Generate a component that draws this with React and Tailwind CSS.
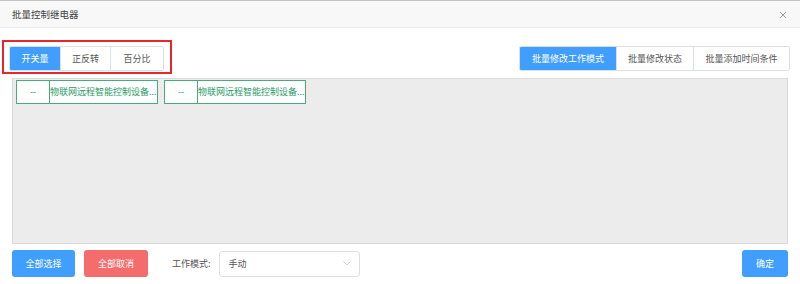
import React from "react";

const font = { fontFamily: '"Noto Sans CJK SC", "Liberation Sans", sans-serif' };

const leftTabs = ["开关量", "正反转", "百分比"];
const leftW = ["w-[50px]", "w-[50px]", "w-[53px]"];
const rightTabs = ["批量修改工作模式", "批量修改状态", "批量添加时间条件"];
const rightW = ["w-[96px]", "w-[77px]", "w-[96px]"];

const devices = [
  { id: 1, name: "物联网远程智能控制设备..." },
  { id: 2, name: "物联网远程智能控制设备..." },
];

const App = () => {
  return (
    <div className="relative w-[800px] h-[284px] bg-white text-[9px] text-[#333]" style={font}>
      <div className="h-px bg-[#c4c4c4]" />
      <div className="h-[27px] bg-[#f8f8f8] border-b border-[#ebebeb] flex items-center justify-between pl-3 pr-[13px]">
        <span className="text-[9.5px] text-[#444]">批量控制继电器</span>
        <svg width="8" height="8" viewBox="0 0 8 8" className="mt-[2px]">
          <path d="M1 1 L7 7 M7 1 L1 7" stroke="#a0a0a0" strokeWidth="1" />
        </svg>
      </div>

      <div className="mt-[18px] flex justify-between pl-[9px] pr-[10px]">
        <div className="flex h-[25px] border border-[#dcdfe6] rounded-[2px] overflow-hidden">
          {leftTabs.map((t, i) => (
            <div
              key={t}
              className={`${leftW[i]} flex items-center justify-center ${
                i === 0 ? "bg-[#409eff] text-white" : "bg-white text-[#555] border-l border-[#dcdfe6]"
              }`}
            >
              {t}
            </div>
          ))}
        </div>
        <div className="flex h-[25px] border border-[#dcdfe6] rounded-[2px] overflow-hidden">
          {rightTabs.map((t, i) => (
            <div
              key={t}
              className={`${rightW[i]} flex items-center justify-center ${
                i === 0 ? "bg-[#409eff] text-white" : "bg-white text-[#555] border-l border-[#dcdfe6]"
              }`}
            >
              {t}
            </div>
          ))}
        </div>
      </div>

      <div className="mx-3 mt-[7px] h-[166px] bg-[#ececec] border border-[#dadada] flex items-start gap-[6px] pl-[3px] pt-[1px]">
        {devices.map((d) => (
          <div key={d.id} className="flex h-[24px] w-[142px] bg-white border border-[#4aa97e] text-[#2a9a66]">
            <div className="w-[33px] flex items-center justify-center border-r border-[#4aa97e]">--</div>
            <div className="flex-1 flex items-center whitespace-nowrap overflow-hidden">{d.name}</div>
          </div>
        ))}
      </div>

      <div className="mt-[6px] flex items-center px-3">
        <button className="w-[63px] h-[27px] rounded-[3px] bg-[#409eff] text-white">全部选择</button>
        <button className="ml-[9px] w-[64px] h-[27px] rounded-[3px] bg-[#f56c6c] text-white">全部取消</button>
        <span className="ml-[24px] text-[#555]">工作模式:</span>
        <div className="ml-[8px] w-[141px] h-[26px] border border-[#dcdfe6] rounded-[3px] flex items-center justify-between pl-[9px] pr-[8px] text-[#555]">
          <span>手动</span>
          <svg width="8" height="5" viewBox="0 0 8 5">
            <path d="M0.5 0.5 L4 4 L7.5 0.5" fill="none" stroke="#c0c4cc" strokeWidth="0.8" />
          </svg>
        </div>
        <button className="ml-auto w-[46px] h-[27px] rounded-[3px] bg-[#409eff] text-white">确定</button>
      </div>

      <div className="absolute left-[2px] top-[40px] w-[170px] h-[34px] border-2 border-[#e8262b] pointer-events-none" />
    </div>
  );
};

export default App;
